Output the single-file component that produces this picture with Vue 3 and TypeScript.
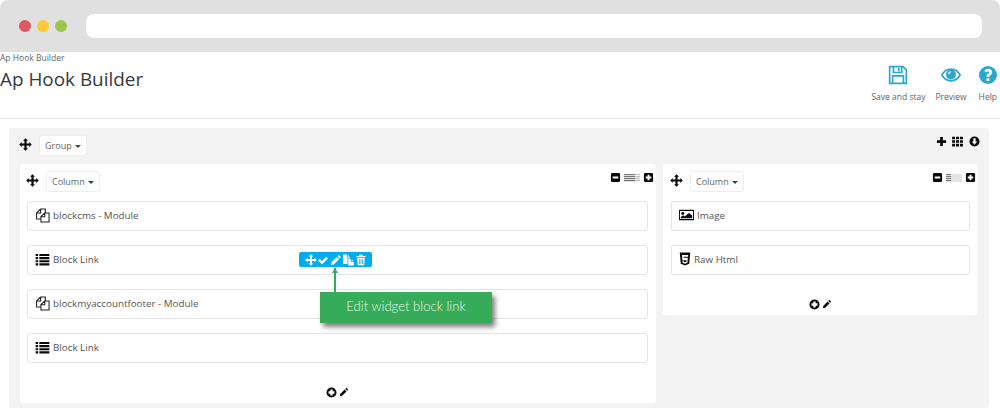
<script setup lang="ts">
interface Widget {
  label: string
  icon: string
}

const icons: Record<string, string> = {
  move: 'M12 .5l4.500 4.500H14v5h5V7.500l4.500 4.500-4.500 4.500V14h-5v5h2.500L12 23.500 7.500 19H10v-5H5v2.500L.5 12 5 7.500V10h5V5H7.500z',
  plus: 'M9 2h6v7h7v6h-7v7H9v-7H2V9h7z',
  grid: 'M2 3h5.500v5H2zM9.200 3h5.600v5H9.200zM16.500 3H22v5h-5.500zM2 9.500h5.500v5H2zM9.200 9.500h5.600v5H9.200zM16.500 9.500H22v5h-5.500zM2 16h5.500v5H2zM9.200 16h5.600v5H9.200zM16.500 16H22v5h-5.500z',
  circleDown: 'M12 1a11 11 0 1 0 0 22 11 11 0 0 0 0-22zM9.500 5h5v7h3.500l-6 7-6-7h3.500z',
  minusBox: 'M5 2h14a3 3 0 0 1 3 3v14a3 3 0 0 1-3 3H5a3 3 0 0 1-3-3V5a3 3 0 0 1 3-3zm1 8v4h12v-4z',
  plusBox: 'M5 2h14a3 3 0 0 1 3 3v14a3 3 0 0 1-3 3H5a3 3 0 0 1-3-3V5a3 3 0 0 1 3-3zm5 4v4H6v4h4v4h4v-4h4v-4h-4V6z',
  circlePlus: 'M12 1a11 11 0 1 0 0 22 11 11 0 0 0 0-22zM9.500 5.500h5v4h4v5h-4v4h-5v-4h-4v-5h4z',
  pencil: 'M17.500 2l4.500 4.500-2.500 2.500L15 4.500zM13.500 6l4.500 4.500L7.500 21 2 22l1-5.500z',
  check: 'M2 13l3.500-3.500 4.500 4.500L18.500 5.500 22 9 10 21z',
  copySolid: 'M2 1h8v6h6v2h-5v11H2zM11.500 1.500l4 4h-4zM12.500 10.500H18V16h5.500v7H12.500zM19.500 10.800l3.700 3.700h-3.700z',
  trash: 'M9 1.500h6l1 2.500h5v2.500H3V4h5zM4.500 8h15l-1 14.500h-13zM8.500 10.500v9.500h1.500v-9.500zM11.250 10.500v9.500h1.500v-9.500zM14 10.500v9.500h1.500v-9.500z',
  list: 'M1 3h4v3.500H1zM7 3h16v3.500H7zM1 8h4v3.500H1zM7 8h16v3.500H7zM1 13h4v3.500H1zM7 13h16v3.500H7zM1 18h4v3.500H1zM7 18h16v3.500H7z',
  image: 'M1 3h22a1 1 0 0 1 1 1v16a1 1 0 0 1-1 1H1a1 1 0 0 1-1-1V4a1 1 0 0 1 1-1zm.500 2v14h21V5zM6 7a2.500 2.500 0 1 1 0 5 2.500 2.500 0 0 1 0-5zM3 17.500v-2l3.500-3 2.500 2 7-6 5 4.500v4.500z',
  html5: 'M1.500 1h21L20.500 20 12 23 3.500 20zM6 5l.8 9h8.200l-.3 2.500-2.700.9-2.700-.9-.2-1.700H6.900l.4 3.700 4.700 1.500 4.700-1.500.9-8.500H9.300l-.2-2h8.800l.3-3z'
}

const leftWidgets: Widget[] = [
  { label: 'blockcms - Module', icon: 'files' },
  { label: 'Block Link', icon: 'list' },
  { label: 'blockmyaccountfooter - Module', icon: 'files' },
  { label: 'Block Link', icon: 'list' }
]
const rightWidgets: Widget[] = [
  { label: 'Image', icon: 'image' },
  { label: 'Raw Html', icon: 'html5' }
]
const floatTools: string[] = ['move', 'check', 'pencil', 'copySolid', 'trash']
</script>

<template>
  <div class="page">
    <div class="chrome">
      <span class="dot red"></span>
      <span class="dot yellow"></span>
      <span class="dot green"></span>
      <div class="address"></div>
    </div>

    <header class="head">
      <div class="titles">
        <div class="crumb">Ap Hook Builder</div>
        <h1 class="title">Ap Hook Builder</h1>
      </div>
      <div class="actions">
        <div class="action">
          <svg class="action-icon" viewBox="0 0 24 24" fill="none" stroke="#2ba6cf" stroke-width="2">
            <path d="M2 2h16l4 4v16H2z" />
            <path d="M6.500 2v7h10V2M13 3.500v4" />
            <path d="M5.500 22v-9h13v9" />
          </svg>
          <span>Save and stay</span>
        </div>
        <div class="action">
          <svg class="action-icon" viewBox="0 0 24 24">
            <path fill="none" stroke="#2ba6cf" stroke-width="2" d="M1 12C4 7 8 5 12 5s8 2 11 7c-3 5-7 7-11 7s-8-2-11-7z" />
            <circle cx="12" cy="11.500" r="6" fill="#2ba6cf" />
            <path fill="#fff" d="M8.500 11c0-2 1.500-3.500 3.500-3.500v1.500c-1 0-2 1-2 2z" />
          </svg>
          <span>Preview</span>
        </div>
        <div class="action help">
          <svg class="action-icon help-icon" viewBox="0 0 24 24">
            <circle cx="12" cy="12" r="12" fill="#2ba6cf" />
            <path fill="#fff" d="M12 3.500c3.200 0 5.600 1.800 5.600 4.800 0 2.100-1.200 3.100-2.500 3.900-.8.500-1.300 1-1.300 1.800v.5h-3.800v-.9c0-1.600.9-2.600 2.100-3.400.9-.6 1.500-1 1.500-1.700 0-.8-.7-1.300-1.600-1.300-1 0-1.800.6-2.500 1.500L7.200 6.300C8.400 4.600 10 3.500 12 3.500zM10 16.200h3.800v3.800H10z" />
          </svg>
          <span>Help</span>
        </div>
      </div>
    </header>

    <main class="content">
      <section class="group">
        <div class="row-head">
          <div class="row-left">
            <svg class="ic move" viewBox="0 0 24 24"><path :d="icons.move" /></svg>
            <button class="drop">Group <i class="caret"></i></button>
          </div>
          <div class="group-tools">
            <svg class="ic t-plus" viewBox="0 0 24 24"><path :d="icons.plus" /></svg>
            <svg class="ic t-grid" viewBox="0 0 24 24"><path :d="icons.grid" /></svg>
            <svg class="ic t-circle" viewBox="0 0 24 24"><path fill-rule="evenodd" :d="icons.circleDown" /></svg>
          </div>
        </div>

        <div class="columns">
          <div class="column wide">
            <div class="row-head col-head">
              <div class="row-left">
                <svg class="ic move" viewBox="0 0 24 24"><path :d="icons.move" /></svg>
                <button class="drop">Column <i class="caret"></i></button>
              </div>
              <div class="width-tools">
                <svg class="ic box" viewBox="0 0 24 24"><path fill-rule="evenodd" :d="icons.minusBox" /></svg>
                <span class="bars full"></span>
                <svg class="ic box" viewBox="0 0 24 24"><path fill-rule="evenodd" :d="icons.plusBox" /></svg>
              </div>
            </div>

            <div v-for="(w, i) in leftWidgets" :key="i" class="item">
              <svg v-if="w.icon === 'files'" class="widget-ic files-ic" viewBox="0 0 24 24">
                <path d="M9 1.500h7.500V8M9 1.500L2.500 8v9.500h7M9 1.500V8H2.500" />
                <path d="M15.500 8h7v14.500H9.500V13.500zM15.500 8v6H9.500" />
              </svg>
              <svg v-else class="ic widget-ic" viewBox="0 0 24 24"><path fill-rule="evenodd" :d="icons[w.icon]" /></svg>
              <span>{{ w.label }}</span>
              <template v-if="i === 1">
                <div class="float-tools">
                  <svg v-for="t in floatTools" :key="t" class="float-ic" viewBox="0 0 24 24"><path fill-rule="evenodd" :d="icons[t]" /></svg>
                </div>
                <div class="pointer"></div>
                <div class="callout">Edit widget block link</div>
              </template>
            </div>

            <div class="add">
              <svg class="ic add-ic" viewBox="0 0 24 24"><path fill-rule="evenodd" :d="icons.circlePlus" /></svg>
              <svg class="ic add-ic pen" viewBox="0 0 24 24"><path :d="icons.pencil" /></svg>
            </div>
          </div>

          <div class="column narrow">
            <div class="row-head col-head">
              <div class="row-left">
                <svg class="ic move" viewBox="0 0 24 24"><path :d="icons.move" /></svg>
                <button class="drop">Column <i class="caret"></i></button>
              </div>
              <div class="width-tools">
                <svg class="ic box" viewBox="0 0 24 24"><path fill-rule="evenodd" :d="icons.minusBox" /></svg>
                <span class="bars part"></span>
                <svg class="ic box" viewBox="0 0 24 24"><path fill-rule="evenodd" :d="icons.plusBox" /></svg>
              </div>
            </div>

            <div v-for="(w, i) in rightWidgets" :key="i" class="item">
              <svg class="ic widget-ic" :class="w.icon === 'image' ? 'img-ic' : 'html-ic'" viewBox="0 0 24 24" preserveAspectRatio="none"><path fill-rule="evenodd" :d="icons[w.icon]" /></svg>
              <span>{{ w.label }}</span>
            </div>

            <div class="add">
              <svg class="ic add-ic" viewBox="0 0 24 24"><path fill-rule="evenodd" :d="icons.circlePlus" /></svg>
              <svg class="ic add-ic pen" viewBox="0 0 24 24"><path :d="icons.pencil" /></svg>
            </div>
          </div>
        </div>
      </section>
    </main>
  </div>
</template>

<style>
html, body { margin: 0; background: #fff; }
</style>

<style scoped>
.page {
  width: 1000px;
  height: 416px;
  overflow: hidden;
  background: #fff;
  font-family: "Open Sans", "Liberation Sans", sans-serif;
  color: #555;
}
.chrome {
  height: 52px;
  background: #e0e0e0;
  border-radius: 8px 8px 0 0;
  display: flex;
  align-items: center;
  padding-left: 19px;
  box-sizing: border-box;
}
.dot { width: 12px; height: 12px; border-radius: 50%; margin-right: 6px; flex: none; }
.red { background: #dc5a5f; }
.yellow { background: #fdc93a; }
.green { background: #9bc64c; }
.address {
  width: 896px;
  height: 24px;
  margin-left: 13px;
  background: #fff;
  border-radius: 8px;
}
.head {
  height: 66px;
  border-bottom: 1px solid #e6e6e6;
  display: flex;
  justify-content: space-between;
}
.crumb { font-size: 8.500px; line-height: 12px; color: #666; }
.title {
  margin: 2px 0 0;
  font-size: 18.900px;
  line-height: 26px;
  font-weight: 400;
  color: #363a41;
}
.actions { display: flex; gap: 10px; padding: 13px 3px 0 0; }
.action {
  display: flex;
  flex-direction: column;
  align-items: center;
  font-size: 8.500px;
  line-height: 12px;
  color: #666;
}
.help { margin-left: 2px; }
.action-icon { width: 20px; height: 20px; margin-bottom: 6px; flex: none; }
.help-icon { width: 18px; height: 18px; margin: 1px 0 7px; }
.content { padding: 9px 11px 0 9px; }
.group {
  height: 280px;
  box-sizing: border-box;
  background: #f3f3f3;
  border-radius: 3px;
  padding: 7px 9px 5px 11px;
}
.row-head { display: flex; justify-content: space-between; height: 21px; }
.row-left { display: flex; align-items: center; gap: 7px; }
.ic { fill: #0a0a0a; display: block; flex: none; }
.move { width: 13px; height: 13px; margin: -3px 0 0 -1px; }
.drop {
  font-family: inherit;
  font-size: 9px;
  line-height: 19px;
  height: 21px;
  box-sizing: border-box;
  padding: 0 5px;
  background: #fff;
  border: 1px solid #eee;
  border-radius: 3px;
  color: #666;
}
.caret {
  display: inline-block;
  width: 0;
  height: 0;
  margin-left: 1px;
  vertical-align: 1px;
  border-left: 3px solid transparent;
  border-right: 3px solid transparent;
  border-top: 3px solid #444;
}
.group-tools { display: flex; align-items: center; height: 12px; }
.t-plus { width: 11px; height: 11px; margin-right: 4px; }
.t-grid { width: 13px; height: 13px; margin-right: 5px; }
.t-circle { width: 11px; height: 11px; }
.columns { display: flex; gap: 7px; margin-top: 8px; align-items: flex-start; }
.column {
  background: #fff;
  border-radius: 3px;
  padding: 7px 8px 5px 7px;
  box-sizing: border-box;
}
.wide { width: 636px; }
.narrow { width: 315px; padding-left: 8px; }
.col-head { margin-bottom: 9px; margin-right: -6px; }
.width-tools { display: flex; align-items: center; gap: 2px; height: 11px; margin-top: 1px; }
.box { width: 11px; height: 11px; }
.bars { width: 16px; height: 8px; display: block; margin: 0 1px; }
.full {
  background: repeating-linear-gradient(to bottom, #777 0, #777 1px, #ddd 1px, #ddd 2px);
  box-shadow: inset -5px 0 0 rgba(255, 255, 255, .55);
}
.part {
  background:
    linear-gradient(to right, transparent 0, transparent 5px, #e4e4e4 5px),
    repeating-linear-gradient(to bottom, #777 0, #777 1px, #ddd 1px, #ddd 2px);
}
.item {
  position: relative;
  height: 30px;
  box-sizing: border-box;
  border: 1px solid #e4e4e4;
  border-radius: 3px;
  margin-bottom: 14px;
  display: flex;
  align-items: center;
  padding: 0 0 2px 7px;
  gap: 3px;
  font-size: 9.800px;
  color: #555;
}
.item:last-of-type { margin-bottom: 0; }
.widget-ic { width: 15px; height: 15px; flex: none; display: block; }
.files-ic { fill: #fff; stroke: #222; stroke-width: 1.700; }
.img-ic { width: 15px; height: 14px; }
.html-ic { width: 12px; height: 14px; }
.float-tools {
  position: absolute;
  left: 271px;
  top: 6px;
  width: 73px;
  height: 15px;
  box-sizing: border-box;
  background: #00aeef;
  border-radius: 2px;
  display: flex;
  justify-content: center;
  align-items: center;
  gap: .5px;
}
.float-ic { width: 12px; height: 12px; fill: #fff; display: block; }
.pointer {
  position: absolute;
  left: 306px;
  top: 22px;
  width: 2px;
  height: 25px;
  background: #36ac5a;
  z-index: 1;
}
.pointer::before {
  content: "";
  position: absolute;
  left: -2.500px;
  top: 0;
  border-left: 3.500px solid transparent;
  border-right: 3.500px solid transparent;
  border-bottom: 5px solid #36ac5a;
}
.callout {
  position: absolute;
  left: 292px;
  top: 46px;
  width: 172px;
  height: 31px;
  z-index: 2;
  background: #36ac5a;
  color: #e4f5e8;
  font-family: Lato, "Open Sans", sans-serif;
  font-weight: 300;
  font-size: 13.100px;
  line-height: 29px;
  text-align: center;
  box-shadow: 3px 4px 5px rgba(0, 0, 0, .5);
}
.add { display: flex; justify-content: center; gap: 2px; margin-top: 23px; height: 12px; align-items: center; }
.add-ic { width: 11px; height: 11px; }
.pen { width: 10px; height: 10px; }
</style>
